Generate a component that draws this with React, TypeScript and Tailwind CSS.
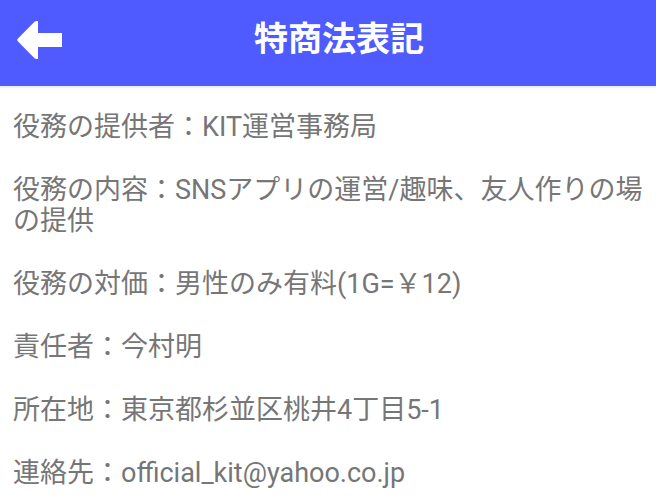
import React from "react";

const items: string[] = [
  "役務の提供者：KIT運営事務局",
  "役務の内容：SNSアプリの運営/趣味、友人作りの場の提供",
  "役務の対価：男性のみ有料(1G=￥12)",
  "責任者：今村明",
  "所在地：東京都杉並区桃井4丁目5-1",
  "連絡先：official_kit@yahoo.co.jp",
];

export default function App() {
  return (
    <div
      className="w-[656px] h-[503px] bg-white overflow-hidden"
      style={{ fontFamily: 'Roboto, "Noto Sans CJK JP", sans-serif' }}
    >
      <header className="h-[88px] bg-[#4f5bff] flex items-start border-b-2 border-[#eef0fa]">
        <div className="w-[62px] shrink-0 pt-[21px]">
          <svg width="62" height="38" viewBox="0 21 62 38" className="block">
            <path
              d="M17.5 39 L34.5 21.8 Q35.5 21 37 21 L38 21 L38 33 L62 33 L62 47 L38 47 L38 59 L37 59 Q35.5 59 34.5 58.2 L17.5 41 Q17 40 17.5 39 Z"
              fill="#ffffff"
            />
          </svg>
        </div>
        <h1
          className="flex-1 text-center pr-[40px] pt-[20px] text-white font-bold text-[34px] leading-none"
          style={{ fontFamily: '"Noto Sans CJK JP", sans-serif' }}
        >
          特商法表記
        </h1>
      </header>
      <main className="pt-[24px] pl-[13px] pr-[10px] flex flex-col gap-[32px]">
        {items.map((t) => (
          <p key={t} className="text-[27px] leading-[31px] text-[#767676]">
            {t}
          </p>
        ))}
      </main>
    </div>
  );
}
